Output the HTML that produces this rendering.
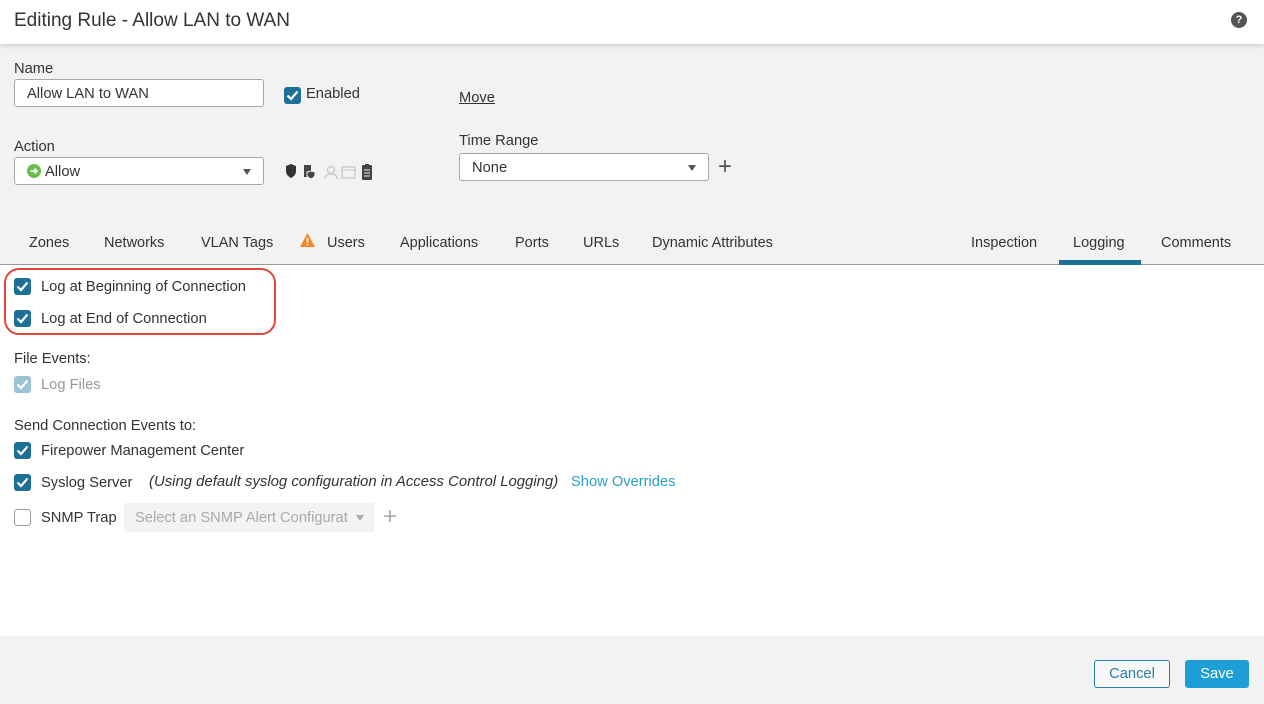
<!DOCTYPE html>
<html><head><meta charset="utf-8"><style>
*{box-sizing:border-box;margin:0;padding:0}
body{width:1264px;height:704px;position:relative;overflow:hidden;background:#fff;font-family:"Liberation Sans",Arial,sans-serif;color:#333;font-size:14.7px}
.a{position:absolute;white-space:nowrap}
.hdr{left:0;top:0;width:1264px;height:44px;background:#fff;box-shadow:0 2px 4px rgba(0,0,0,.15);z-index:2}
.gray{left:0;top:44px;width:1264px;height:221px;background:#f2f2f2;border-bottom:1px solid #9a9a9a}
.inp{background:#fff;border:1px solid #a8a8a8;border-radius:3px;height:28px}
.cb{position:absolute;width:17px;height:17px;border-radius:3px;background:#1d6f96}
.cb svg{position:absolute;left:2px;top:3px}
.cbd{background:#9cc2d5}
.cbe{background:#fff;border:1px solid #9a9a9a}
.tri{width:0;height:0;border-left:4px solid transparent;border-right:4px solid transparent;border-top:6px solid #555}
.foot{left:0;top:636px;width:1264px;height:68px;background:#f2f2f2}
.tab{font-size:14.5px}
</style></head><body>
<div class="a hdr">
 <div class="a" style="left:14px;top:10px;font-size:19px;color:#333">Editing Rule - Allow LAN to WAN</div>
 <div class="a" style="left:1231px;top:12px;width:16px;height:16px;border-radius:50%;background:#555;color:#fff;font-size:11px;font-weight:bold;text-align:center;line-height:16px">?</div>
</div>
<div class="a gray"></div>
<div class="a" style="left:14px;top:61px">Name</div>
<div class="a inp" style="left:14px;top:79px;width:250px;height:28px;padding:6px 12px">Allow LAN to WAN</div>
<div class="cb" style="left:284px;top:87px"><svg width="13" height="11" viewBox="0 0 13 11"><path d="M1.5 5.5L5 9L11.5 1.5" stroke="#fff" stroke-width="2.2" fill="none"/></svg></div>
<div class="a" style="left:306px;top:86px">Enabled</div>
<div class="a" style="left:459px;top:90px;text-decoration:underline">Move</div>
<div class="a" style="left:14px;top:139px">Action</div>
<div class="a inp" style="left:14px;top:157px;width:250px;height:28px"></div>
<div class="a" style="left:27px;top:164px;width:14px;height:14px;border-radius:50%;background:#6abf4b"><svg width="14" height="14" viewBox="0 0 14 14"><path d="M3.5 7H10M7.5 4.5L10 7L7.5 9.5" stroke="#fff" stroke-width="1.6" fill="none"/></svg></div>
<div class="a" style="left:45px;top:164px">Allow</div>
<div class="a tri" style="left:243px;top:169px"></div>
<svg class="a" style="left:285px;top:163px" width="92" height="18" viewBox="0 0 92 18">
 <path d="M1 3L6 1L11 3V8C11 12 8 14 6 15C4 14 1 12 1 8Z" fill="#333"/>
 <rect x="19" y="2" width="7" height="12" fill="#444"/><path d="M22 9L26 8L30 9V12C30 14 28 15 26 16C24 15 22 14 22 12Z" fill="#444" stroke="#f2f2f2" stroke-width="1"/>
 <circle cx="46" cy="7" r="3.5" fill="none" stroke="#c8c8c8" stroke-width="1.3"/><path d="M40 16C40 12 43 11 46 11C49 11 52 12 52 16" fill="none" stroke="#c8c8c8" stroke-width="1.3"/>
 <rect x="57" y="4" width="13" height="11" fill="none" stroke="#c8c8c8" stroke-width="1.3"/><path d="M57 7H70" stroke="#c8c8c8"/>
 <rect x="77" y="2" width="10" height="15" rx="1" fill="#444"/><path d="M79 7H85M79 10H85M79 13H85" stroke="#eee" stroke-width="1"/><rect x="80" y="1" width="4" height="2" fill="#444"/>
</svg>
<div class="a" style="left:459px;top:133px">Time Range</div>
<div class="a inp" style="left:459px;top:153px;width:250px;height:28px;padding:6px 12px">None</div>
<div class="a tri" style="left:688px;top:165px"></div>
<div class="a" style="left:718px;top:153px;font-size:24px;color:#555;font-weight:300">+</div>
<div class="a tab" style="left:29px;top:235px">Zones</div>
<div class="a tab" style="left:104px;top:235px">Networks</div>
<div class="a tab" style="left:201px;top:235px">VLAN Tags</div>
<svg class="a" style="left:299px;top:232px" width="17" height="16" viewBox="0 0 17 16"><path d="M8.5 1L16 15H1Z" fill="#f0882c"/><path d="M8.5 6V10.5" stroke="#fff" stroke-width="1.6"/><circle cx="8.5" cy="12.5" r="0.9" fill="#fff"/></svg>
<div class="a tab" style="left:327px;top:235px">Users</div>
<div class="a tab" style="left:400px;top:235px">Applications</div>
<div class="a tab" style="left:515px;top:235px">Ports</div>
<div class="a tab" style="left:583px;top:235px">URLs</div>
<div class="a tab" style="left:652px;top:235px">Dynamic Attributes</div>
<div class="a tab" style="left:971px;top:235px">Inspection</div>
<div class="a tab" style="left:1073px;top:235px">Logging</div>
<div class="a tab" style="left:1161px;top:235px">Comments</div>
<div class="a" style="left:1059px;top:260px;width:82px;height:5px;background:#1b6f95"></div>
<div class="a" style="left:4px;top:268px;width:272px;height:67px;border:2px solid #e2463b;border-radius:15px"></div>
<div class="cb" style="left:14px;top:278px"><svg width="13" height="11" viewBox="0 0 13 11"><path d="M1.5 5.5L5 9L11.5 1.5" stroke="#fff" stroke-width="2.2" fill="none"/></svg></div>
<div class="a" style="left:41px;top:279px">Log at Beginning of Connection</div>
<div class="cb" style="left:14px;top:310px"><svg width="13" height="11" viewBox="0 0 13 11"><path d="M1.5 5.5L5 9L11.5 1.5" stroke="#fff" stroke-width="2.2" fill="none"/></svg></div>
<div class="a" style="left:41px;top:311px">Log at End of Connection</div>
<div class="a" style="left:14px;top:351px">File Events:</div>
<div class="cb cbd" style="left:14px;top:376px"><svg width="13" height="11" viewBox="0 0 13 11"><path d="M1.5 5.5L5 9L11.5 1.5" stroke="#fff" stroke-width="2.2" fill="none"/></svg></div>
<div class="a" style="left:41px;top:377px;color:#999">Log Files</div>
<div class="a" style="left:14px;top:418px">Send Connection Events to:</div>
<div class="cb" style="left:14px;top:442px"><svg width="13" height="11" viewBox="0 0 13 11"><path d="M1.5 5.5L5 9L11.5 1.5" stroke="#fff" stroke-width="2.2" fill="none"/></svg></div>
<div class="a" style="left:41px;top:443px">Firepower Management Center</div>
<div class="cb" style="left:14px;top:474px"><svg width="13" height="11" viewBox="0 0 13 11"><path d="M1.5 5.5L5 9L11.5 1.5" stroke="#fff" stroke-width="2.2" fill="none"/></svg></div>
<div class="a" style="left:41px;top:475px">Syslog Server</div>
<div class="a" style="left:149px;top:474px;font-style:italic;font-size:14.9px">(Using default syslog configuration in Access Control Logging)</div>
<div class="a" style="left:571px;top:474px;color:#2b9fc6">Show Overrides</div>
<div class="cb cbe" style="left:14px;top:509px"></div>
<div class="a" style="left:41px;top:510px">SNMP Trap</div>
<div class="a" style="left:124px;top:503px;width:250px;height:29px;background:#f3f3f3;padding:7px 11px;color:#aaa">Select an SNMP Alert Configurat</div>
<div class="a tri" style="left:356px;top:515px;border-top-color:#aaa"></div>
<div class="a" style="left:383px;top:503px;font-size:24px;color:#aaa;font-weight:300">+</div>
<div class="a foot"></div>
<div class="a" style="left:1094px;top:660px;width:76px;height:28px;border:1px solid #2b7fa6;border-radius:3px;background:#f7f7f7;color:#2b7fa6;text-align:center;line-height:26px">Cancel</div>
<div class="a" style="left:1185px;top:660px;width:64px;height:28px;border-radius:3px;background:#1d9ed6;color:#fff;text-align:center;line-height:28px">Save</div>
</body></html>
